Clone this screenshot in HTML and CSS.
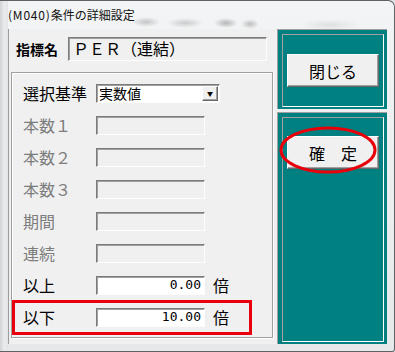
FILE: index.html
```html
<!DOCTYPE html>
<html lang="ja">

<head>
    <meta charset="UTF-8">
    <title>(M040)条件の詳細設定</title>
    <link rel="stylesheet" href="styles.css">
</head>

<body>
    <div class="window">
        <div class="titlebar"><span class="title"><span class="code">(M040)</span>条件の詳細設定</span></div>
        <div class="client">
            <div class="left">
                <div class="name-row">
                    <span class="name-label">指標名</span>
                    <div class="name-box">ＰＥＲ（連結）</div>
                </div>
                <div class="group">
                    <div class="row">
                        <span class="label">選択基準</span>
                        <div class="select"><span class="select-text">実数値</span><span class="drop">▼</span></div>
                    </div>
                    <div class="row off"><span class="label">本数１</span><div class="field"></div></div>
                    <div class="row off"><span class="label">本数２</span><div class="field"></div></div>
                    <div class="row off"><span class="label">本数３</span><div class="field"></div></div>
                    <div class="row off"><span class="label">期間</span><div class="field"></div></div>
                    <div class="row off"><span class="label">連続</span><div class="field"></div></div>
                    <div class="row">
                        <span class="label">以上</span><div class="field on">0.00</div><span class="unit">倍</span>
                    </div>
                    <div class="row">
                        <span class="label">以下</span><div class="field on">10.00</div><span class="unit">倍</span>
                    </div>
                    <!-- 赤枠 -->
                    <div class="mark-rect"></div>
                </div>
            </div>
            <div class="right">
                <div class="panel top">
                    <div class="frame"><button class="btn">閉じる</button></div>
                </div>
                <div class="panel bottom">
                    <div class="frame"><button class="btn">確　定</button></div>
                </div>
                <svg class="mark-oval" width="110" height="160" viewBox="0 0 110 160">
                    <ellipse cx="51" cy="121" rx="47" ry="22" fill="none" stroke="#e8000b" stroke-width="3" />
                </svg>
            </div>
        </div>
    </div>
</body>

</html>
```

FILE: styles.css
```css
* {
    margin: 0;
    padding: 0;
    box-sizing: border-box;
}

html,
body {
    width: 395px;
    height: 352px;
    overflow: hidden;
    background: #dfe2e5;
    font-family: "Noto Sans CJK JP", "Noto Sans", sans-serif;
}

.window {
    width: 395px;
    height: 352px;
    display: flex;
    flex-direction: column;
    border-top: 1px solid #5e6166;
    border-right: 1px solid #5e6166;
    border-bottom: 1px solid #5e6166;
    border-top-right-radius: 7px;
    border-bottom-right-radius: 3px;
    background:
        linear-gradient(to right, #cfd3d6 0, #e9ebed 4px, #e2e4e6 8px, transparent 8px),
        linear-gradient(#f3f4f5, #e6e8ea);
}

.titlebar {
    height: 28px;
    padding-left: 8px;
    background:
        radial-gradient(ellipse 14px 5px at 146px 21px, rgba(110, 110, 110, .35), transparent),
        radial-gradient(ellipse 18px 5px at 185px 22px, rgba(110, 110, 110, .3), transparent),
        radial-gradient(ellipse 12px 5px at 226px 22px, rgba(90, 90, 90, .4), transparent),
        radial-gradient(ellipse 9px 5px at 250px 23px, rgba(90, 90, 90, .35), transparent),
        radial-gradient(ellipse 30px 6px at 330px 24px, rgba(150, 150, 150, .2), transparent);
}

.title {
    font-size: 12px;
    line-height: 28px;
    color: #111;
}

.title .code {
    letter-spacing: 0.8px;
}

.client {
    flex: 1;
    display: flex;
    margin: 0 7px 7px 8px;
    background: #f0f0f0;
    border-left: 1px solid #9c9c9c;
}

/* 左側 */
.left {
    width: 265px;
    display: flex;
    flex-direction: column;
}

.name-row {
    height: 42px;
    display: flex;
    align-items: flex-start;
    padding: 8px 0 0 7px;
}

.name-label {
    width: 52px;
    font-size: 14px;
    font-weight: bold;
    line-height: 24px;
    color: #000;
}

.name-box {
    width: 199px;
    height: 24px;
    padding-left: 4px;
    font-size: 16px;
    line-height: 21px;
    color: #000;
    border: 1px solid;
    border-color: #7b7b7b #fdfdfd #fdfdfd #7b7b7b;
    box-shadow: inset 1px 1px 0 #a0a0a0;
}

.group {
    position: relative;
    margin: 1px 0 0 2px;
    width: 262px;
    height: 266px;
    padding-top: 4px;
    border: 1px solid #a0a0a0;
    box-shadow: inset 1px 1px 0 #fff, 1px 1px 0 #fff;
}

.row {
    height: 32px;
    display: flex;
    align-items: center;
    padding-left: 11px;
}

.label {
    width: 73px;
    font-size: 16px;
    color: #000;
}

.off .label {
    color: #7d7d7d;
}

.select {
    width: 124px;
    height: 19px;
    display: flex;
    align-items: center;
    justify-content: space-between;
    padding: 0 1px 0 2px;
    background: #fff;
    border: 1px solid;
    border-color: #7b7b7b #fdfdfd #fdfdfd #7b7b7b;
    box-shadow: inset 1px 1px 0 #a0a0a0;
}

.select-text {
    font-size: 14px;
    line-height: 17px;
}

.drop {
    width: 16px;
    height: 15px;
    font-size: 6px;
    line-height: 13px;
    text-align: center;
    background: #f0f0f0;
    border: 1px solid;
    border-color: #fff #696969 #696969 #fff;
    box-shadow: inset -1px -1px 0 #a0a0a0;
}

.field {
    width: 109px;
    height: 19px;
    padding-right: 3px;
    text-align: right;
    font-family: "DejaVu Sans Mono", monospace;
    font-size: 13px;
    line-height: 16px;
    border: 1px solid;
    border-color: #7b7b7b #fdfdfd #fdfdfd #7b7b7b;
    box-shadow: inset 1px 1px 0 #a0a0a0;
}

.field.on {
    background: #fff;
}

.unit {
    margin-left: 8px;
    font-size: 16px;
}

.mark-rect {
    position: absolute;
    left: 0;
    top: 227px;
    width: 240px;
    height: 35px;
    border: 3px solid #e8000b;
}

/* 右側 */
.right {
    position: relative;
    width: 110px;
    margin-left: 3px;
    display: flex;
    flex-direction: column;
    gap: 3px;
}

.panel {
    background: #008080;
    border-left: 1px solid #a0a0a0;
    border-top: 1px solid #a0a0a0;
    padding: 4px 3px 2px 4px;
}

.panel.top {
    height: 80px;
}

.panel.bottom {
    flex: 1;
}

.frame {
    height: 100%;
    padding: 19px 4px 0;
    border: 1px solid;
    border-color: #a0a0a0 #fff #fff #a0a0a0;
}

.bottom .frame {
    padding-top: 18px;
}

.btn {
    width: 92px;
    height: 33px;
    font-family: "Noto Sans CJK JP", sans-serif;
    font-size: 16px;
    color: #000;
    background: #f0f0f0;
    border: 1px solid;
    border-color: #fff #696969 #696969 #fff;
    box-shadow: inset -1px -1px 0 #a0a0a0;
}

.mark-oval {
    position: absolute;
    left: 0;
    top: 0;
}
```
